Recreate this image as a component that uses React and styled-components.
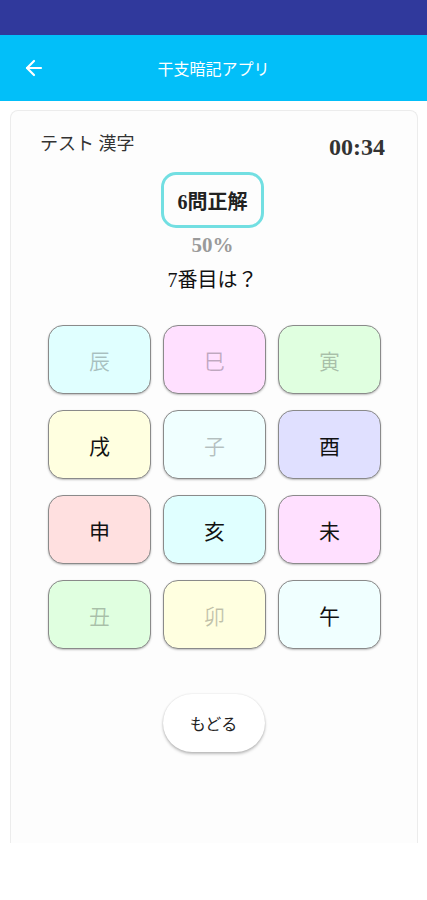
import React from 'react';
import styled, { createGlobalStyle } from 'styled-components';
import { ArrowLeft } from 'lucide-react';

const GlobalStyle = createGlobalStyle`
  body {
    margin: 0;
    background: #ffffff;
    font-family: "Liberation Serif", "Noto Sans CJK JP", serif;
  }
`;

const Screen = styled.div`
  width: 427px;
  min-height: 900px;
  background: #ffffff;
`;

const StatusBar = styled.div`
  height: 35px;
  background: #30399c;
`;

const AppBar = styled.header`
  height: 66px;
  background: #02bff9;
  display: flex;
  align-items: center;
  padding: 0 22px;
  box-sizing: border-box;
`;

const BackButton = styled.button`
  background: none;
  border: none;
  padding: 0;
  display: flex;
  color: #fff;
  cursor: pointer;
`;

const Title = styled.h1`
  flex: 1;
  margin: 0 0 0 -24px;
  text-align: center;
  color: #fff;
  font-family: "Noto Sans CJK JP", sans-serif;
  font-size: 16px;
  font-weight: 400;
`;

const Card = styled.main`
  margin: 9px 9px 0 10px;
  height: 733px;
  box-sizing: border-box;
  border: 1px solid #ececec;
  border-bottom: none;
  border-radius: 8px 8px 0 0;
  background: #fdfdfd;
  padding: 18px 32px 0 29px;
  display: flex;
  flex-direction: column;
  align-items: center;
`;

const TopRow = styled.div`
  width: 100%;
  display: flex;
  justify-content: space-between;
  align-items: center;
  height: 30px;
`;

const Mode = styled.span`
  font-size: 18px;
  line-height: 30px;
  color: #333;
`;

const Timer = styled.span`
  font-size: 24px;
  line-height: 30px;
  font-weight: 700;
  color: #333;
  margin-top: 6px;
`;

const ScorePill = styled.div`
  margin-top: 13px;
  width: 103px;
  height: 56px;
  box-sizing: border-box;
  border: 3px solid #72dfe2;
  border-radius: 15px;
  display: flex;
  align-items: center;
  justify-content: center;
  font-size: 20px;
  font-weight: 700;
  color: #222;
`;

const Percent = styled.div`
  margin-top: 4px;
  line-height: 26px;
  font-size: 21px;
  font-weight: 700;
  color: #9a9a9a;
`;

const Question = styled.div`
  margin-top: 8px;
  line-height: 28px;
  font-size: 20px;
  color: #111;
`;

const Grid = styled.div`
  margin-top: 31px;
  display: grid;
  grid-template-columns: repeat(3, 103px);
  column-gap: 12px;
  row-gap: 16px;
  margin-left: 4px;
`;

const Tile = styled.button`
  height: 69px;
  border: 1px solid #8a8a8a;
  border-radius: 15px;
  background: ${p => p.$bg};
  box-shadow: 0 1px 2px rgba(0, 0, 0, 0.25);
  font-family: "Noto Sans CJK JP", sans-serif;
  font-size: 21px;
  color: ${p => (p.$done ? 'rgba(0, 0, 0, 0.25)' : '#111')};
  cursor: pointer;
`;

const BackPill = styled.button`
  margin-top: 45px;
  margin-left: 2px;
  width: 102px;
  height: 58px;
  border: none;
  border-radius: 29px;
  background: #fff;
  box-shadow: 0 2px 3px rgba(0, 0, 0, 0.25), 0 0 2px rgba(0, 0, 0, 0.12);
  font-family: "Noto Sans CJK JP", sans-serif;
  font-size: 16px;
  color: #222;
  cursor: pointer;
`;

const tiles = [
  { k: '辰', bg: '#e0ffff', done: true },
  { k: '巳', bg: '#ffe0ff', done: true },
  { k: '寅', bg: '#e0ffe0', done: true },
  { k: '戌', bg: '#ffffe0', done: false },
  { k: '子', bg: '#f0ffff', done: true },
  { k: '酉', bg: '#e0e0ff', done: false },
  { k: '申', bg: '#ffe0e0', done: false },
  { k: '亥', bg: '#e0ffff', done: false },
  { k: '未', bg: '#ffe0ff', done: false },
  { k: '丑', bg: '#e0ffe0', done: true },
  { k: '卯', bg: '#ffffe0', done: true },
  { k: '午', bg: '#f0ffff', done: false },
];

export default function App() {
  return (
    <Screen>
      <GlobalStyle />
      <StatusBar />
      <AppBar>
        <BackButton aria-label="back">
          <ArrowLeft size={24} strokeWidth={2.2} />
        </BackButton>
        <Title>干支暗記アプリ</Title>
      </AppBar>
      <Card>
        <TopRow>
          <Mode>テスト 漢字</Mode>
          <Timer>00:34</Timer>
        </TopRow>
        <ScorePill>6問正解</ScorePill>
        <Percent>50%</Percent>
        <Question>7番目は？</Question>
        <Grid>
          {tiles.map(t => (
            <Tile key={t.k} $bg={t.bg} $done={t.done}>{t.k}</Tile>
          ))}
        </Grid>
        <BackPill>もどる</BackPill>
      </Card>
    </Screen>
  );
}
